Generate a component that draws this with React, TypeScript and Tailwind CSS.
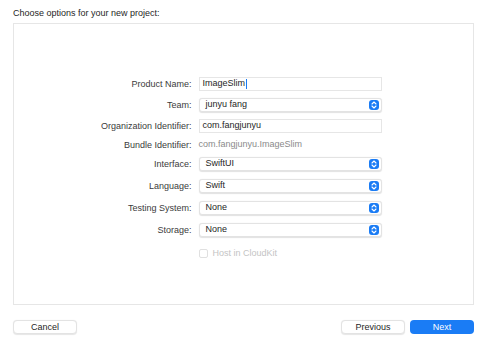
const rows: { label: string; kind: 'text' | 'popup' | 'static'; value: string; gap: string }[] = [
  { label: 'Product Name:', kind: 'text', value: 'ImageSlim', gap: 'mt-0' },
  { label: 'Team:', kind: 'popup', value: 'junyu fang', gap: 'mt-[7px]' },
  { label: 'Organization Identifier:', kind: 'text', value: 'com.fangjunyu', gap: 'mt-[7px]' },
  { label: 'Bundle Identifier:', kind: 'static', value: 'com.fangjunyu.ImageSlim', gap: 'mt-[7px]' },
  { label: 'Interface:', kind: 'popup', value: 'SwiftUI', gap: 'mt-[7px]' },
  { label: 'Language:', kind: 'popup', value: 'Swift', gap: 'mt-[8px]' },
  { label: 'Testing System:', kind: 'popup', value: 'None', gap: 'mt-[8px]' },
  { label: 'Storage:', kind: 'popup', value: 'None', gap: 'mt-[8px]' },
];

function Stepper() {
  return (
    <span className="flex h-[10px] w-[10px] items-center justify-center rounded-[3px] bg-[#1a7cf5]">
      <svg width="6" height="8" viewBox="0 0 6 8" fill="none" stroke="white" strokeWidth="1.1" strokeLinecap="round" strokeLinejoin="round">
        <path d="M1 3 L3 1 L5 3" />
        <path d="M1 5 L3 7 L5 5" />
      </svg>
    </span>
  );
}

function Field({ kind, value }: { kind: string; value: string }) {
  if (kind === 'static') {
    return <div className="flex h-[10px] items-center text-[#8a8a8a]">{value}</div>;
  }
  if (kind === 'text') {
    return (
      <div className="flex h-[14px] w-[183px] items-center border border-[#e6e6e6] bg-white pl-[3px] text-[#262626]">
        {value}
        {value === 'ImageSlim' && <span className="ml-px h-[10px] w-px bg-[#1a7cf5]" />}
      </div>
    );
  }
  return (
    <div className="flex h-[14px] w-[183px] items-center justify-between rounded-[3px] border border-[#e3e3e3] bg-white pr-[2px] pl-[6px] text-[#262626] shadow-[0_0.5px_1px_rgba(0,0,0,0.12)]">
      <span>{value}</span>
      <Stepper />
    </div>
  );
}

export default function App() {
  return (
    <div className="flex h-[347px] w-[487px] flex-col bg-white px-[13px] font-['Liberation_Sans',Arial,sans-serif] text-[9px]">
      <p className="pt-[8px] pb-[4px] leading-[11px] text-[#262626]">Choose options for your new project:</p>
      <div className="flex h-[282px] flex-col items-center border border-[#e6e6e6] pt-[53px] pr-[5px]">
        <div className="flex flex-col">
          {rows.map((row) => (
            <div key={row.label} className={`flex items-center gap-[7px] ${row.gap}`}>
              <div className="w-[91px] text-right leading-[10px] whitespace-nowrap text-[#3b3b3b]">{row.label}</div>
              <Field kind={row.kind} value={row.value} />
            </div>
          ))}
          <div className="mt-[10px] flex items-center gap-[5px] pl-[98px] text-[#c4c4c4]">
            <span className="h-[9px] w-[9px] rounded-[2px] border border-[#e0e0e0]" />
            Host in CloudKit
          </div>
        </div>
      </div>
      <div className="mt-[15px] flex items-center">
        <button className="h-[14px] w-[64px] rounded-[4px] border border-[#e3e3e3] bg-white leading-none text-[#262626] shadow-[0_0.5px_1px_rgba(0,0,0,0.1)]">Cancel</button>
        <div className="flex-1" />
        <button className="h-[14px] w-[64px] rounded-[4px] border border-[#e3e3e3] bg-white leading-none text-[#262626] shadow-[0_0.5px_1px_rgba(0,0,0,0.1)]">Previous</button>
        <button className="ml-[5px] h-[14px] w-[64px] rounded-[4px] bg-[#1a7cf5] leading-none text-white">Next</button>
      </div>
    </div>
  );
}
